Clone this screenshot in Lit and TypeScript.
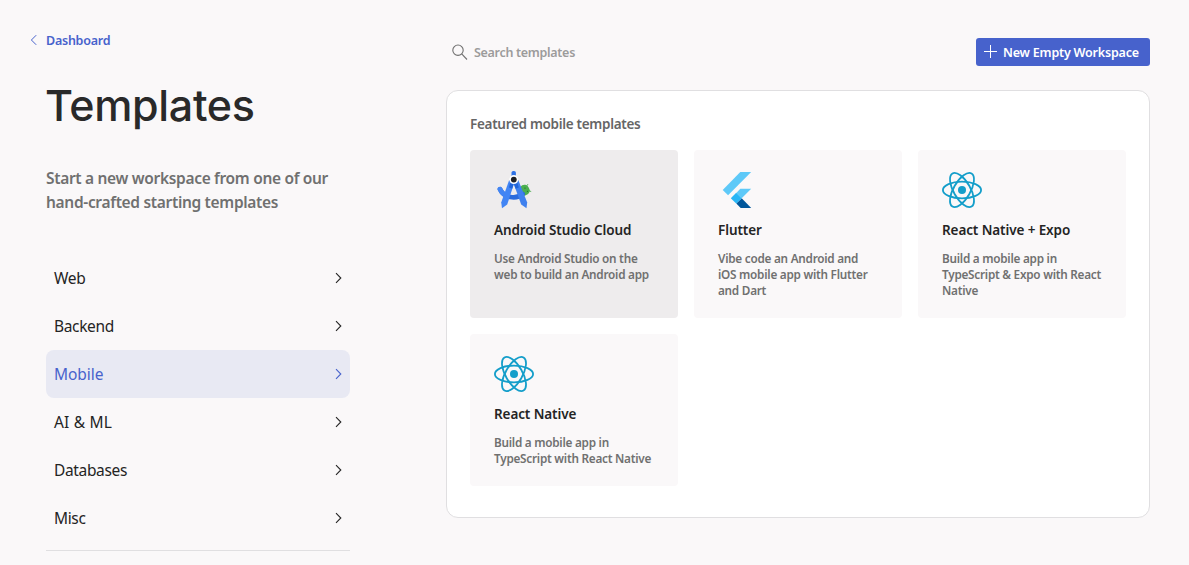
import { LitElement, html, css, svg } from "lit";
import { customElement, property, state } from "lit/decorators.js";
import { classMap } from "lit/directives/class-map.js";

type IconName = "android" | "flutter" | "react";

interface Template {
  icon: IconName;
  title: string;
  text: string;
}

const TEMPLATES: Template[] = [
  { icon: "android", title: "Android Studio Cloud", text: "Use Android Studio on the web to build an Android app" },
  { icon: "flutter", title: "Flutter", text: "Vibe code an Android and iOS mobile app with Flutter and Dart" },
  { icon: "react", title: "React Native + Expo", text: "Build a mobile app in TypeScript & Expo with React Native" },
  { icon: "react", title: "React Native", text: "Build a mobile app in TypeScript with React Native" },
];

const CATEGORIES = ["Web", "Backend", "Mobile", "AI & ML", "Databases", "Misc"];

const ICONS = {
  android: svg`
    <path d="M26.5 17 C28.5 13.6 34.5 13.6 35.8 20.6 C35.6 24 31 27 27.5 25.5 Z" fill="#4caf50"/>
    <path d="M32.6 16 L33.8 14.4 M35 20.8 L36.8 21.4" stroke="#4caf50" stroke-width="0.9" stroke-linecap="round"/>
    <circle cx="31" cy="18.1" r="0.55" fill="#1b5e20"/><circle cx="33.4" cy="21.2" r="0.55" fill="#1b5e20"/>
    <path d="M6 19.2 C9.5 28 22.5 29.6 28.5 24" fill="none" stroke="#2a6bdc" stroke-width="4.8" stroke-linecap="round"/>
    <path d="M6 19.2 C7 21.8 8.4 23.3 10.8 24.8" fill="none" stroke="#4285f4" stroke-width="4.8" stroke-linecap="round"/>
    <rect x="17.5" y="0.9" width="4.4" height="8" rx="1.9" fill="#2e72e6"/>
    <path d="M15.2 10 L20.4 12.5 L13.2 34.4 L8 38.3 L7.2 32.4 Z" fill="#4285f4"/>
    <path d="M24.3 10 L19.2 12.5 L27.2 34.4 L32.5 38.3 L33.2 32.4 Z" fill="#3f80ee"/>
    <path d="M16 13.2 L19.8 13.5 L18.2 18.8 L15 17.4 Z M23.5 13.2 L19.8 13.5 L21.6 18.8 L24.8 17.4 Z" fill="#2265d8"/>
    <circle cx="19.8" cy="9.6" r="4.5" fill="#fff"/>
    <circle cx="19.8" cy="9.6" r="2.9" fill="#202124"/>`,
  flutter: svg`
    <path d="M22.3 2 H33.2 L10.1 25.2 L4.7 19.9 Z" fill="#5ec9f8"/>
    <path d="M22.3 18.7 H33.2 L23.7 28.2 L18.3 22.9 Z" fill="#5ec9f8"/>
    <path d="M18.3 33.6 L23.7 28.2 L33.2 38 H22.7 Z" fill="#01579b"/>
    <path d="M12.8 28.2 L18.2 22.8 L23.7 28.2 L18.2 33.6 Z" fill="#29b6f6"/>`,
  react: svg`
    <g transform="translate(20 20)" fill="none" stroke="#149eca" stroke-width="1.8">
      <circle r="4" fill="#149eca" stroke="none"/>
      <ellipse rx="19.1" ry="8.4"/>
      <ellipse rx="19.1" ry="8.4" transform="rotate(60)"/>
      <ellipse rx="19.1" ry="8.4" transform="rotate(120)"/>
    </g>`,
};

@customElement("template-card")
export class TemplateCard extends LitElement {
  @property({ attribute: false }) item!: Template;

  static styles = css`
    :host { display: block; box-sizing: border-box; padding: 20px 24px; border-radius: 4px; background: #faf8f9; cursor: pointer; }
    :host([active]) { background: #eeeced; }
    .icon { display: block; width: 40px; height: 40px; }
    .title { margin: 10px 0; font-size: 13.5px; line-height: 20px; font-weight: 600; letter-spacing: -0.1px; color: #242424; }
    .text { margin: 0; font-size: 11.75px; line-height: 16px; font-weight: 600; letter-spacing: -0.25px; color: #707070; }
  `;

  render() {
    return html`
      <svg class="icon" viewBox="0 0 40 40">${ICONS[this.item.icon]}</svg>
      <h3 class="title">${this.item.title}</h3>
      <p class="text">${this.item.text}</p>`;
  }
}

@customElement("app-root")
export class AppRoot extends LitElement {
  @state() private selected = "Mobile";

  static styles = css`
    :host { display: block; height: 565px; overflow: hidden; background: #faf8f9; color: #242424; font-family: "Noto Sans", "Open Sans", sans-serif; }
    .page { display: flex; }
    .side { width: 304px; padding: 30px 0 0 46px; }
    .back { display: flex; align-items: center; gap: 8px; height: 20px; margin-left: -16px; color: #4762cc; font-size: 12.5px; font-weight: 600; letter-spacing: -0.25px; text-decoration: none; }
    .back svg { width: 8px; height: 12px; }
    h1 { margin: 27px 0 0; font: 500 43px/56px Inter, sans-serif; letter-spacing: -0.35px; text-indent: -1px; color: #292929; }
    .intro { margin: 33px 0 40px; font-size: 15.5px; line-height: 24px; font-weight: 600; letter-spacing: -0.32px; color: #707070; white-space: nowrap; }
    .nav { border-bottom: 1px solid #e0dfe1; padding-bottom: 8px; }
    .row { display: flex; align-items: center; justify-content: space-between; height: 48px; box-sizing: border-box; padding: 0 8px; border-radius: 8px; font-size: 15.5px; letter-spacing: -0.35px; cursor: pointer; }
    .row.selected { background: #e8e9f3; color: #4762cc; letter-spacing: -0.05px; }
    .row.loose { letter-spacing: 0.2px; }
    .row svg { width: 8px; height: 12px; }
    .main { width: 704px; margin-left: 96px; padding-top: 38px; }
    .bar { display: flex; align-items: center; justify-content: space-between; height: 28px; margin-bottom: 24px; }
    .search { display: flex; align-items: center; gap: 6px; padding-left: 5px; font-size: 12.5px; font-weight: 600; letter-spacing: -0.3px; color: #9c9b9b; }
    .search svg { width: 17px; height: 17px; }
    .create { display: flex; align-items: center; gap: 6px; height: 28px; width: 174px; box-sizing: border-box; padding: 0 0 0 8px; border: 0; border-radius: 3px; background: #4762cc; color: #fff; font: 600 12.5px "Noto Sans", sans-serif; letter-spacing: -0.2px; white-space: nowrap; }
    .create svg { width: 13px; height: 13px; flex: none; margin-bottom: 2px; }
    .panel { height: 428px; box-sizing: border-box; padding: 23px; border: 1px solid #e0dfe1; border-radius: 12px; background: #fff; }
    h2 { margin: 0 0 16px; font-size: 13.5px; line-height: 20px; font-weight: 600; letter-spacing: -0.3px; color: #666; }
    .grid { display: grid; grid-template-columns: repeat(3, 208px); grid-template-rows: 168px 152px; gap: 16px; }
  `;

  render() {
    return html`
      <div class="page">
        <aside class="side">
          <a class="back">
            <svg viewBox="0 0 8 12" fill="none" stroke="currentColor"><path d="M6.2 1.2 L1.4 6 L6.2 10.8"/></svg>
            <span>Dashboard</span>
          </a>
          <h1>Templates</h1>
          <p class="intro">Start a new workspace from one of our<br />hand-crafted starting templates</p>
          <nav class="nav">
            ${CATEGORIES.map((name) => html`
              <div class=${classMap({ row: true, selected: name === this.selected, loose: name === "AI & ML" })} @click=${() => (this.selected = name)}>
                <span>${name}</span>
                <svg viewBox="0 0 8 12" fill="none" stroke="currentColor" stroke-width="1.1"><path d="M2 1.2 L6.8 6 L2 10.8"/></svg>
              </div>`)}
          </nav>
        </aside>
        <main class="main">
          <div class="bar">
            <div class="search">
              <svg viewBox="0 0 17 17" fill="none" stroke="#707070" stroke-width="1.1"><circle cx="7" cy="6.2" r="5.2"/><path d="M10.7 9.9 L16 15.5"/></svg>
              <span>Search templates</span>
            </div>
            <button class="create">
              <svg viewBox="0 0 13 13" stroke="#fff"><path d="M6.5 0 V13 M0 6.5 H13"/></svg>
              <span>New Empty Workspace</span>
            </button>
          </div>
          <section class="panel">
            <h2>Featured mobile templates</h2>
            <div class="grid">
              ${TEMPLATES.map((item, i) => html`<template-card .item=${item} ?active=${i === 0}></template-card>`)}
            </div>
          </section>
        </main>
      </div>`;
  }
}
